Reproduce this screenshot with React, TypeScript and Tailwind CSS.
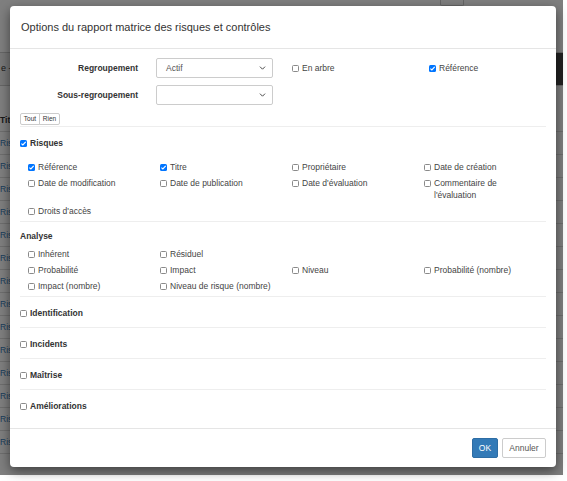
import React from 'react'

const bgRows = [
  'Risque de chute de plain-pied',
  'Risque de chute de hauteur',
  'Risque lié à la manutention manuelle',
  'Risque lié aux produits chimiques',
  'Risque lié aux équipements de travail',
  'Risque routier',
  'Risque électrique',
  'Risque d\u2019incendie',
  'Risque lié au travail sur écran',
  'Risque biologique',
  'Risque psychosocial',
  'Risque thermique',
  'Risque lié à l\u2019éclairage',
  'Risque de surexposition au bruit',
]

function Box({ checked }: { checked?: boolean }) {
  if (checked) {
    return (
      <span className="inline-flex h-[7px] w-[7px] shrink-0 items-center justify-center rounded-[1.5px] bg-[#0075ff]">
        <svg viewBox="0 0 8 8" className="h-[7px] w-[7px]">
          <path d="M1.6 4.1 3.3 5.7 6.5 2.2" fill="none" stroke="#fff" strokeWidth="1.3" />
        </svg>
      </span>
    )
  }
  return <span className="inline-block h-[7px] w-[7px] shrink-0 rounded-[1.5px] border border-[#8a8a8a] bg-white" />
}

function Item({ label, checked, bold }: { label: string; checked?: boolean; bold?: boolean }) {
  return (
    <div className="flex items-start gap-[3px] leading-[12px]">
      <span className="mt-[2.5px] flex">
        <Box checked={checked} />
      </span>
      <span className={bold ? 'font-bold text-[#333]' : 'text-[#444]'}>{label}</span>
    </div>
  )
}

function Select({ value }: { value?: string }) {
  return (
    <div className="ml-[18px] flex h-[20px] w-[117px] items-center justify-between rounded-[2px] border border-[#ccc] bg-white pl-[9px] pr-[6px] text-[#555]">
      <span>{value}</span>
      <svg viewBox="0 0 8 5" className="h-[4px] w-[7px]">
        <path d="M0.8 0.8 4 4 7.2 0.8" fill="none" stroke="#333" strokeWidth="1.1" />
      </svg>
    </div>
  )
}

type Cell = { label: string; checked?: boolean } | null

function Grid({ items }: { items: Cell[] }) {
  return (
    <div className="grid grid-cols-[132px_132px_132px_100px] gap-y-[4px] pl-[8px]">
      {items.map((it, i) => (it ? <Item key={i} label={it.label} checked={it.checked} /> : <div key={i} />))}
    </div>
  )
}

export default function App() {
  return (
    <div className="relative h-[481px] w-[567px] overflow-hidden bg-white font-['Liberation_Sans',Arial,sans-serif] text-[8.5px] text-[#333]">
      {/* page behind the dialog */}
      <div className="relative h-[475px] w-[563px] overflow-hidden">
        <div className="h-[52px] bg-white">
          <div className="ml-[440px] h-[6px] w-[24px] rounded-b-[2px] border border-t-0 border-[#ccc]" />
        </div>
        <div className="flex h-[34px] items-center justify-between border-y border-[#ccc] bg-[#f0f0f0]">
          <span className="pl-[1px] text-[9px]">e -</span>
          <div className="h-full w-[45px] bg-[#444]" />
        </div>
        <div className="mt-[23px] flex h-[23px] items-center border-b border-[#ddd] font-bold">Titre</div>
        {bgRows.map(r => (
          <div key={r} className="flex h-[23px] items-center border-b border-[#ddd] text-[#337ab7]">
            {r}
          </div>
        ))}
        <div className="absolute inset-0 bg-black/50" />
      </div>

      {/* dialog */}
      <div className="absolute left-[10px] top-[6px] flex h-[461px] w-[546px] flex-col rounded-[4px] bg-white shadow-[0_4px_12px_rgba(0,0,0,0.5)]">
        <div className="flex h-[43px] shrink-0 items-center border-b border-[#e5e5e5] px-[11px] text-[11px] text-[#333]">
          Options du rapport matrice des risques et contrôles
        </div>

        <div className="flex-1 px-[10px] pt-[9px]">
          <div className="flex h-[20px] items-center">
            <div className="w-[118px] text-right font-bold">Regroupement</div>
            <Select value="Actif" />
            <div className="ml-[19px] w-[137px]">
              <Item label="En arbre" />
            </div>
            <Item label="Référence" checked />
          </div>
          <div className="mt-[7px] flex h-[20px] items-center">
            <div className="w-[118px] text-right font-bold">Sous-regroupement</div>
            <Select />
          </div>
          <div className="mt-[8px] flex h-[12px] text-[6.5px] text-[#333]">
            <span className="flex w-[20px] items-center justify-center rounded-l-[2px] border border-[#ccc]">Tout</span>
            <span className="-ml-px flex w-[21px] items-center justify-center rounded-r-[2px] border border-[#ccc]">Rien</span>
          </div>

          <div className="mt-[1px] border-t border-[#eee] pb-[4px] pt-[10px]">
            <Item label="Risques" checked bold />
            <div className="mt-[12px]">
              <Grid
                items={[
                  { label: 'Référence', checked: true },
                  { label: 'Titre', checked: true },
                  { label: 'Propriétaire' },
                  { label: 'Date de création' },
                  { label: 'Date de modification' },
                  { label: 'Date de publication' },
                  { label: "Date d'évaluation" },
                  { label: "Commentaire de l'évaluation" },
                  { label: "Droits d'accès" },
                ]}
              />
            </div>
          </div>

          <div className="border-t border-[#eee] pb-[4px] pt-[8px]">
            <div className="font-bold leading-[12px]">Analyse</div>
            <div className="mt-[6px]">
              <Grid
                items={[
                  { label: 'Inhérent' },
                  { label: 'Résiduel' },
                  null,
                  null,
                  { label: 'Probabilité' },
                  { label: 'Impact' },
                  { label: 'Niveau' },
                  { label: 'Probabilité (nombre)' },
                  { label: 'Impact (nombre)' },
                  { label: 'Niveau de risque (nombre)' },
                ]}
              />
            </div>
          </div>

          {['Identification', 'Incidents', 'Maîtrise', 'Améliorations'].map(s => (
            <div key={s} className="border-t border-[#eee] pb-[8px] pt-[10px]">
              <Item label={s} bold />
            </div>
          ))}
        </div>

        <div className="flex h-[39px] shrink-0 items-center justify-end gap-[4px] border-t border-[#e5e5e5] px-[10px]">
          <button className="flex h-[20px] w-[26px] items-center justify-center rounded-[2px] border border-[#2e6da4] bg-[#337ab7] text-[8.5px] text-white">
            OK
          </button>
          <button className="flex h-[20px] w-[44px] items-center justify-center rounded-[2px] border border-[#ccc] bg-white text-[8.5px] text-[#555]">
            Annuler
          </button>
        </div>
      </div>
    </div>
  )
}
